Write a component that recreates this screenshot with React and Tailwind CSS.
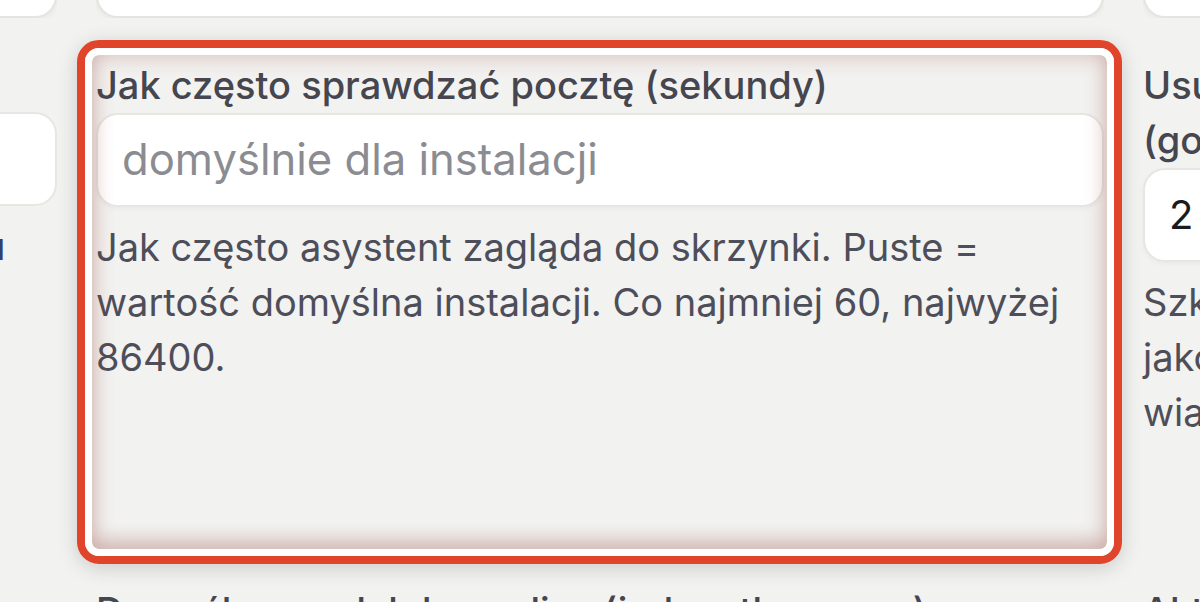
function TopStub({ className }) {
  return (
    <div className={"flex h-[18px] items-end overflow-hidden " + className}>
      <div className="h-[94px] w-full shrink-0 rounded-[22px] border-2 border-[#e4e4e1] bg-white shadow-[0_2px_6px_rgba(0,0,0,0.05)]" />
    </div>
  )
}

function Field({ label, placeholder, value, help }) {
  return (
    <div className="flex flex-col">
      <label className="text-[38px] font-medium leading-[55px] text-[#45464f]">{label}</label>
      <div className="flex h-[94px] items-center rounded-[22px] border-2 border-[#e6e6e3] bg-white px-[24px] shadow-[0_2px_5px_rgba(0,0,0,0.04)]">
        {value ? (
          <span className="text-[40px] text-[#1b1b1f]">{value}</span>
        ) : (
          <span className="whitespace-nowrap text-[43.6px] text-[#8b8c92]">{placeholder}</span>
        )}
      </div>
      <p className="mt-[13px] text-[38px] leading-[55px] text-[#4d4e59]">{help}</p>
    </div>
  )
}

export default function App() {
  return (
    <div
      className="h-[602px] w-[1200px] overflow-hidden bg-[#f2f2f0]"
      style={{ fontFamily: "Inter, 'Noto Sans', sans-serif" }}
    >
      <div className="grid grid-cols-[57px_1008px_400px] gap-x-[39px]">
        <TopStub className="-ml-[200px] w-[257px]" />
        <TopStub />
        <TopStub className="w-[400px]" />
      </div>

      <div className="mt-[40px] grid h-[488px] grid-cols-[57px_1008px_400px] gap-x-[39px]">
        {/* left column, mostly off screen */}
        <div className="flex flex-col">
          <div className="h-[54px]" />
          <div className="-ml-[200px] h-[94px] w-[257px] rounded-[22px] border-2 border-[#e6e6e3] bg-white" />
          <p className="mt-[13px] -ml-[17px] text-[38px] leading-[55px] text-[#34406b]">u</p>
        </div>

        {/* highlighted field */}
        <div className="relative">
          <Field
            label="Jak często sprawdzać pocztę (sekundy)"
            placeholder="domyślnie dla instalacji"
            help="Jak często asystent zagląda do skrzynki. Puste = wartość domyślna instalacji. Co najmniej 60, najwyżej 86400."
          />
          <div className="pointer-events-none absolute -bottom-[18px] -left-[19px] -right-[18px] -top-[18px] rounded-[22px] border-[8px] border-[#e0442a] shadow-[0_4px_20px_rgba(0,0,0,0.16)]">
            <div className="h-full rounded-[14px] border-[7px] border-white shadow-[inset_0_0_22px_rgba(150,70,60,0.32),inset_0_-12px_16px_rgba(150,70,60,0.16)]" />
          </div>
        </div>

        {/* right column, clipped */}
        <div className="whitespace-nowrap">
          <Field
            label={
              <>
                Usuwaj przetworzone
                <br />
                (godziny)
              </>
            }
            value="2"
            help={
              <>
                Szkice odpowiedzi
                <br />
                jako nieprzeczytane
                <br />
                wiadomości
              </>
            }
          />
        </div>
      </div>

      <div className="mt-[38px] grid grid-cols-[57px_1008px_400px] gap-x-[39px] text-[38px] font-medium leading-[55px] text-[#45464f]">
        <div />
        <div className="whitespace-nowrap">Domyślny model do analizy (jednostka czasu)</div>
        <div>Aktywne</div>
      </div>
    </div>
  )
}
